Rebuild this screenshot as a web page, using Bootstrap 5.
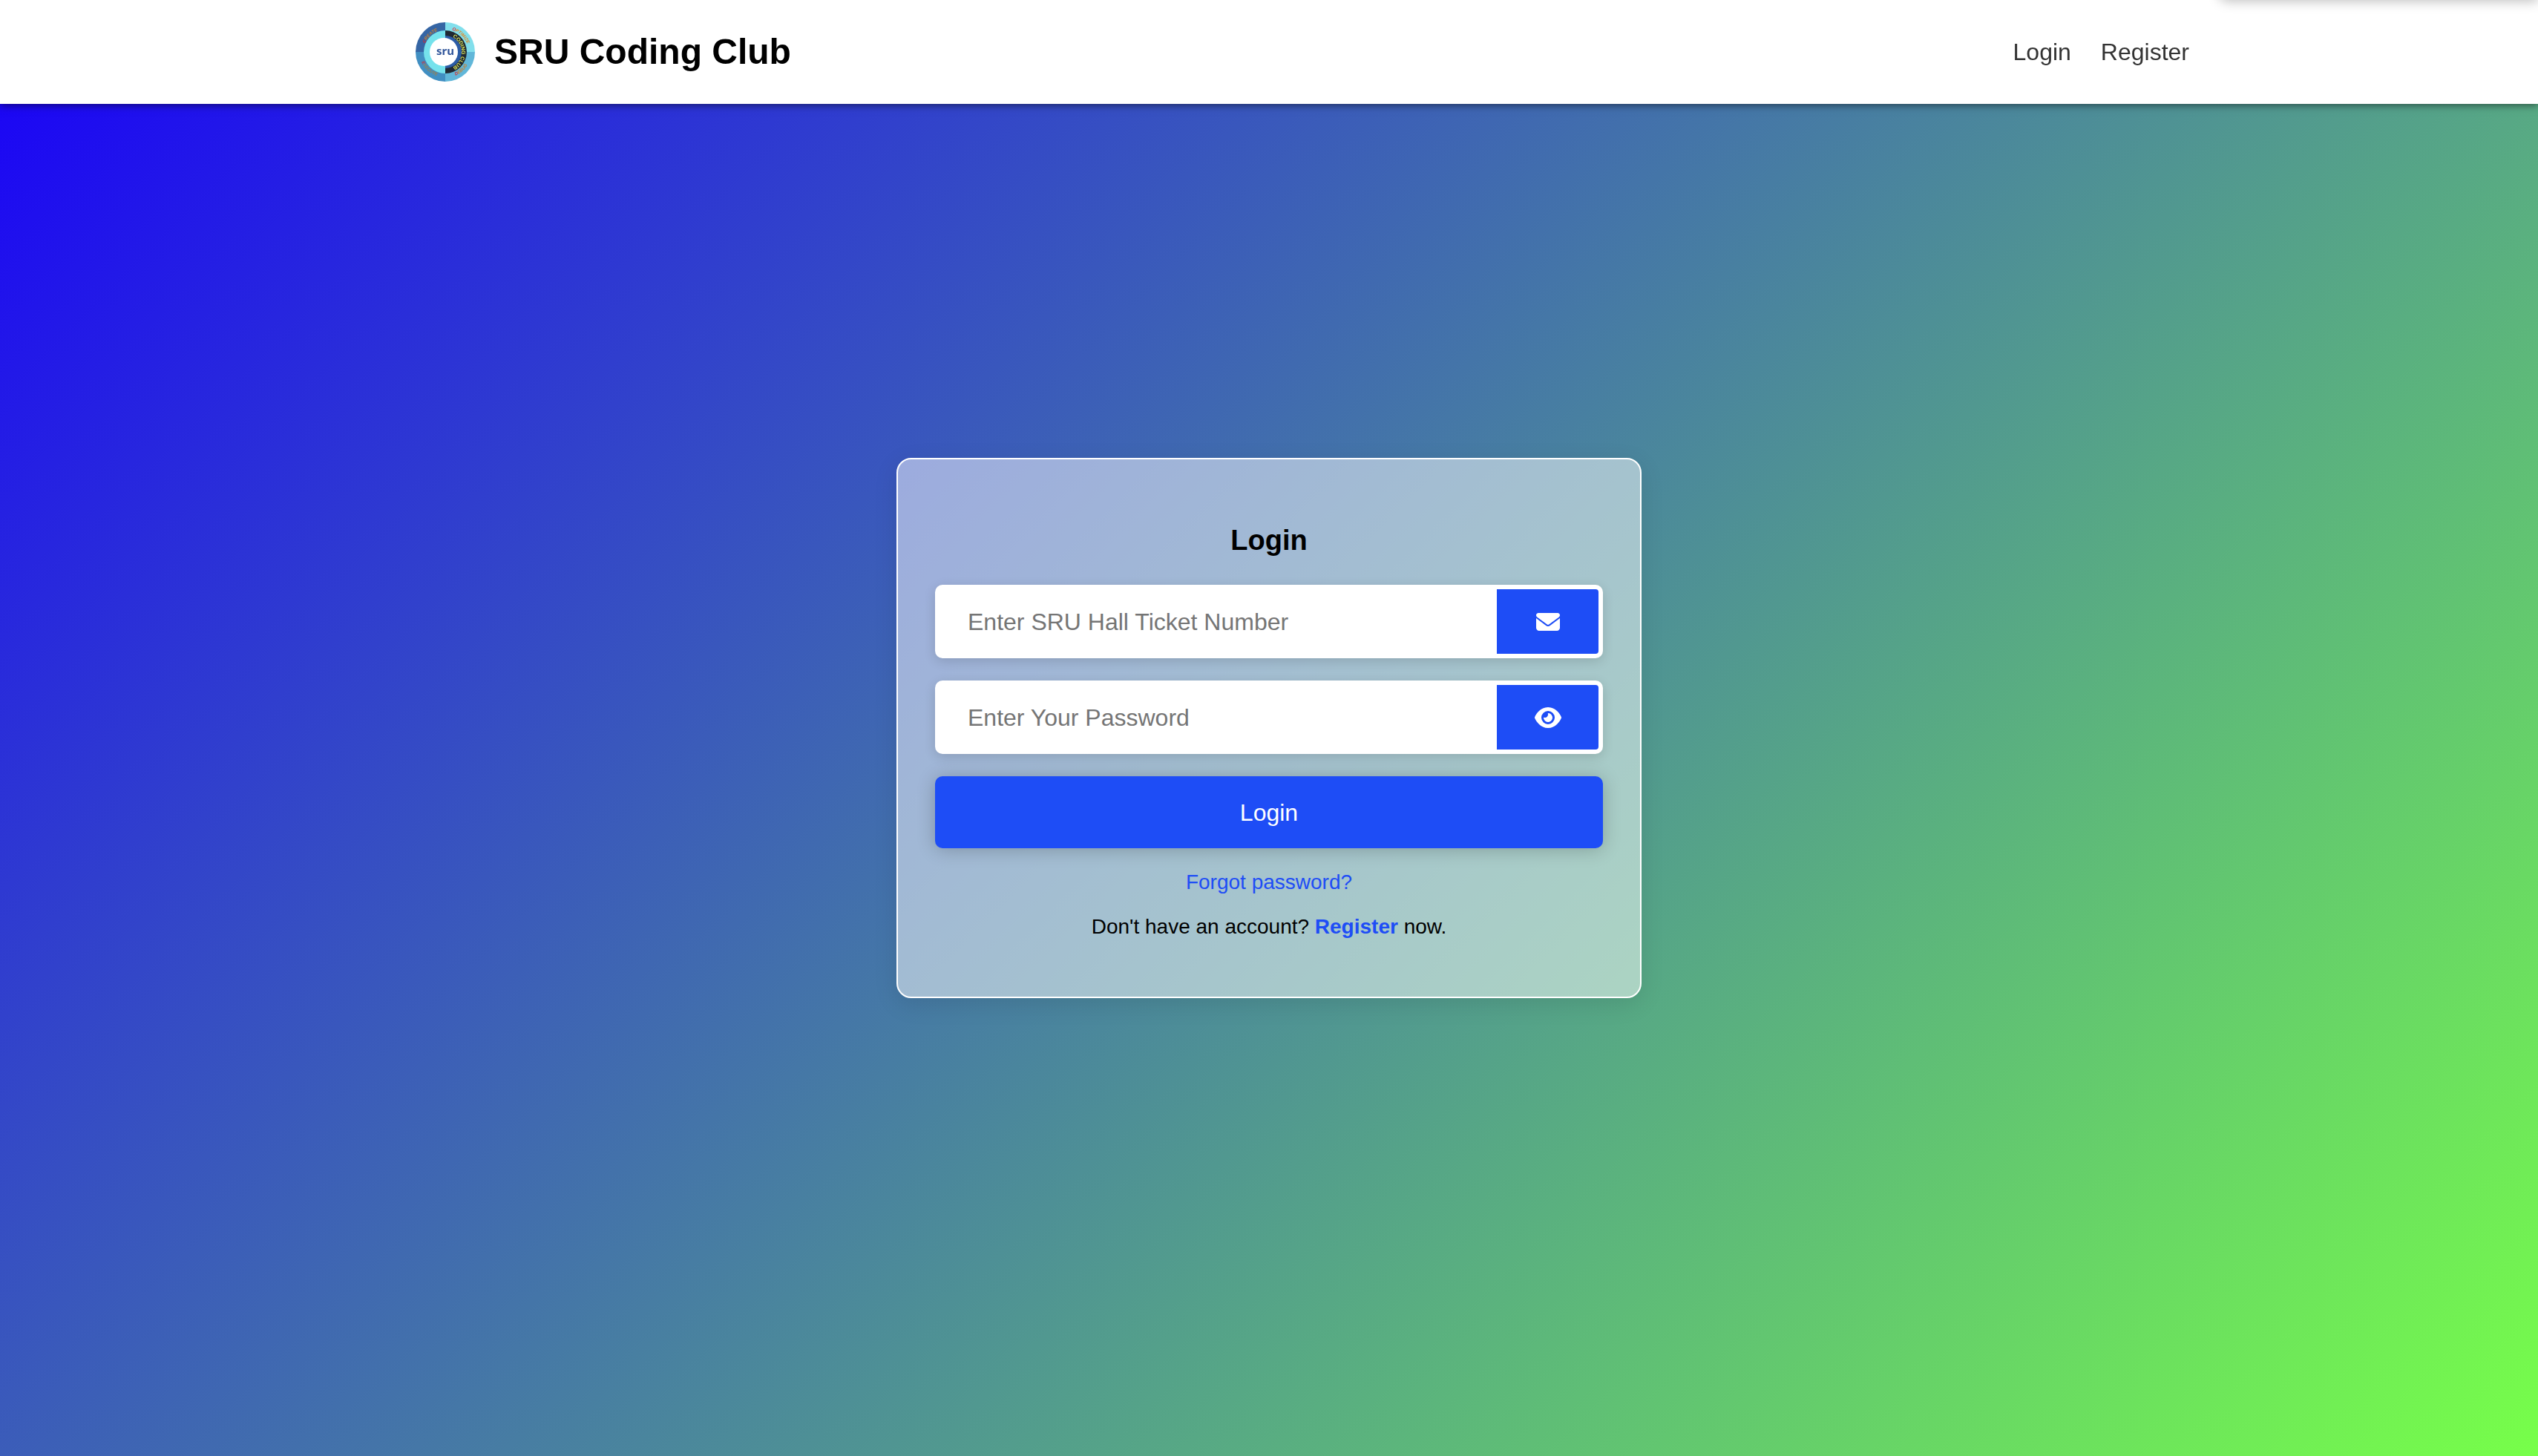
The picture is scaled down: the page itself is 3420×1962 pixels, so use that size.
<!DOCTYPE html>
<html lang="en">
<head>
<meta charset="utf-8">
<meta name="viewport" content="width=device-width, initial-scale=1">
<title>SRU Coding Club</title>
<link href="https://cdn.jsdelivr.net/npm/bootstrap@5.3.0/dist/css/bootstrap.min.css" rel="stylesheet">
<style>
:root { --brand: #1e4df6; }
body {
  font-family: "Liberation Sans", Arial, sans-serif;
  font-size: 32px; line-height: 36px; color: #000;
  background: linear-gradient(135deg, #1900f9, #77ff49) fixed;
}
.site-bar { height: 140px; padding: 0; background: #fff; box-shadow: 0 2px 10px rgba(0,0,0,.5); z-index: 2; }
.bar-inner { max-width: 2500px; padding: 0 10px 0 100px; }
.brand { gap: 26px; color: #000; font-size: 48px; line-height: 56px; font-weight: 700; }
.brand-logo { width: 80px; height: 80px; }
.main-links { gap: 40px; }
.main-links a { color: #333; text-decoration: none; }
.peek { top: -60px; right: 0; width: 430px; height: 60px; z-index: 3; border-radius: 12px 0 0 12px; box-shadow: 0 2px 16px rgba(0,0,0,.25); }
.page-main { min-height: 100vh; }
.login-box {
  width: 1004px; max-width: 100%; padding: 87px 50px 78px;
  border: 2px solid #fff; border-radius: 20px;
  background: rgba(255,255,255,.5); box-shadow: 0 8px 32px rgba(0,0,0,.1);
}
.login-box h1 { font-size: 38px; line-height: 44px; font-weight: 700; margin-bottom: 38px; }
.field { height: 99px; padding: 6px; background: #fff; border-radius: 10px; box-shadow: 0 4px 16px rgba(0,0,0,.14); margin-bottom: 30px; }
.field input { border: 0; background: transparent; padding: 0 38px; font-size: 32px; color: #000; box-shadow: none; }
.field input::placeholder { color: #757575; }
.field-end { width: 137px; border: 0; background: var(--brand); color: #fff; border-radius: 0 4px 4px 0; }
.field-end svg { height: 32px; fill: currentColor; }
.login-btn { height: 97px; border: 0; border-radius: 10px; background: var(--brand); color: #fff; font-size: 32px; box-shadow: 0 2px 24px rgba(0,0,0,.22); margin-bottom: 30px; }
.below { font-size: 28px; line-height: 32px; margin-bottom: 28px; }
.below a { color: var(--brand); text-decoration: none; }
</style>
<script src="https://cdn.jsdelivr.net/npm/bootstrap@5.3.0/dist/js/bootstrap.bundle.min.js" defer></script>
</head>
<body>
<header class="site-bar navbar fixed-top">
  <div class="bar-inner container-fluid d-flex justify-content-between align-items-center">
    <a class="brand d-flex align-items-center text-decoration-none" href="#">
      <svg class="brand-logo" viewBox="0 0 80 80" role="img" aria-label="SRU logo">
        <defs>
          <path id="arcA" d="M11 34A30 30 0 0 1 37 10"/>
          <path id="arcB" d="M46 10A31 31 0 0 1 71 34"/>
          <path id="arcC" d="M50 20A23 23 0 0 1 51 60"/>
          <path id="arcD" d="M7 51A35 35 0 0 0 38 74"/>
          <path id="arcE" d="M50 73A34 34 0 0 0 73 51"/>
        </defs>
        <path fill="#3565a4" d="M40 0A40 40 0 0 0 0 40H40Z"/>
        <path fill="#82dfec" d="M40 0A40 40 0 0 1 80 40H40Z"/>
        <path fill="#418fc2" d="M0 40A40 40 0 0 0 40 80V40Z"/>
        <path fill="#61b7d9" d="M80 40A40 40 0 0 1 40 80V40Z"/>
        <circle cx="40" cy="40" r="29" fill="#75e2ec"/>
        <path fill="#202831" d="M40 11A29 29 0 0 1 40 69Z"/>
        <path fill="#2c5ca5" d="M40 18A22 22 0 0 1 40 62Z"/>
        <circle cx="38" cy="40" r="19" fill="#fff"/>
        <text x="40" y="44" text-anchor="middle" font-family="Noto Sans" font-weight="700" font-size="15" fill="#30559a">sru</text>
        <g font-family="Liberation Sans" font-weight="700" font-style="italic" font-size="6">
          <text fill="#c98032"><textPath href="#arcA" startOffset="6"><tspan fill="#d52b32">C</tspan>REATE</textPath></text>
          <text fill="#e38b2b"><textPath href="#arcB" startOffset="3"><tspan fill="#e02f32">O</tspan>PTIMIZE</textPath></text>
          <text fill="#9b8050"><textPath href="#arcD" startOffset="3"><tspan fill="#c23a45">E</tspan>XECUTE</textPath></text>
          <text fill="#c98032"><textPath href="#arcE" startOffset="4"><tspan fill="#d52b32">D</tspan>EBUG</textPath></text>
        </g>
        <text font-family="Liberation Sans" font-weight="700" font-size="7" fill="#dfe75a"><textPath href="#arcC">CODING CLUB</textPath></text>
      </svg>
      <span>SRU Coding Club</span>
    </a>
    <nav class="main-links d-flex" aria-label="Main">
      <a href="#">Login</a>
      <a href="#">Register</a>
    </nav>
  </div>
</header>
<div class="peek position-fixed" aria-hidden="true"></div>
<main class="page-main d-flex align-items-center justify-content-center">
  <form class="login-box text-center" onsubmit="return false">
    <h1>Login</h1>
    <div class="field d-flex">
      <input class="form-control" id="ticket" type="text" placeholder="Enter SRU Hall Ticket Number" aria-label="SRU Hall Ticket Number">
      <label for="ticket" class="field-end flex-shrink-0 d-flex align-items-center justify-content-center">
        <svg viewBox="0 0 512 512" aria-hidden="true"><path d="M48 64C21.500 64 0 85.500 0 112c0 15.100 7.100 29.300 19.200 38.400L236.800 313.600c11.400 8.500 27 8.500 38.400 0L492.800 150.400c12.100-9.100 19.200-23.300 19.200-38.400c0-26.500-21.500-48-48-48H48zM0 176V384c0 35.300 28.700 64 64 64H448c35.300 0 64-28.700 64-64V176L294.400 339.200c-22.800 17.100-54 17.100-76.800 0L0 176z"/></svg>
      </label>
    </div>
    <div class="field d-flex">
      <input class="form-control" id="secret" type="password" placeholder="Enter Your Password" aria-label="Your Password">
      <button class="field-end flex-shrink-0 d-flex align-items-center justify-content-center" type="button" aria-label="Show password">
        <svg viewBox="0 0 576 512" aria-hidden="true"><path d="M288 32c-80.800 0-145.500 36.800-192.600 80.600C48.600 156 17.300 208 2.500 243.700c-3.300 7.900-3.300 16.700 0 24.600C17.300 304 48.600 356 95.400 399.400C142.500 443.200 207.200 480 288 480s145.500-36.800 192.600-80.600c46.800-43.500 78.100-95.400 93-131.100c3.300-7.900 3.300-16.700 0-24.600c-14.900-35.700-46.200-87.700-93-131.100C433.500 68.800 368.800 32 288 32zM144 256a144 144 0 1 1 288 0 144 144 0 1 1 -288 0zm144-64c0 35.300-28.700 64-64 64c-7.100 0-13.900-1.200-20.300-3.300c-5.500-1.800-11.900 1.600-11.700 7.400c.3 6.900 1.300 13.800 3.200 20.700c13.700 51.200 66.400 81.600 117.600 67.900s81.600-66.400 67.900-117.600c-11.100-41.500-47.800-69.400-88.600-71.100c-5.800-.2-9.200 6.100-7.400 11.700c2.100 6.400 3.300 13.200 3.300 20.300z"/></svg>
      </button>
    </div>
    <button class="login-btn w-100 d-block" type="submit">Login</button>
    <p class="below"><a href="#">Forgot password?</a></p>
    <p class="below mb-0">Don't have an account? <a class="fw-bold" href="#">Register</a> now.</p>
  </form>
</main>
</body>
</html>
